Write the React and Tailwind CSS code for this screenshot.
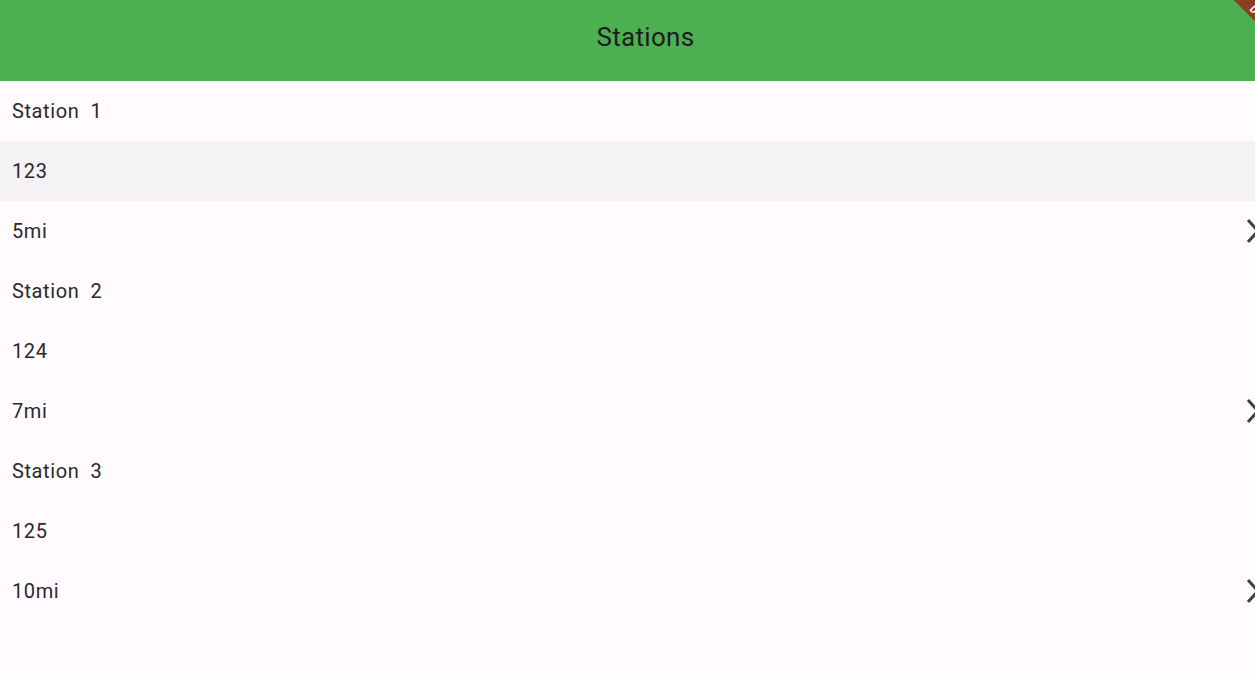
import { Fragment } from 'react'

const stations = [
  { name: 'Station  1', id: '123', dist: '5mi' },
  { name: 'Station  2', id: '124', dist: '7mi' },
  { name: 'Station  3', id: '125', dist: '10mi' },
]

const Chevron = () => (
  <svg width="24" height="28" viewBox="0 0 24 28" className="shrink-0 -mr-[14px]">
    <polyline points="3,3 13,14 3,25" fill="none" stroke="#3f3f46" strokeWidth="3" />
  </svg>
)

const Row = ({ children, shaded, trailing }) => (
  <div
    className={`h-[60px] flex items-center pl-[12px] text-[20px] tracking-[0.6px] text-[#2a282d] ${
      shaded ? 'bg-[#f4f2f4]' : ''
    }`}
  >
    <span className="flex-1 whitespace-pre">{children}</span>
    {trailing && <Chevron />}
  </div>
)

export default function App() {
  return (
    <div
      className="relative w-[1255px] h-[680px] overflow-hidden bg-[#fffbfe]"
      style={{ fontFamily: 'Roboto, "Liberation Sans", sans-serif' }}
    >
      <header className="h-[81px] bg-[#4caf50] flex items-center justify-center pl-[36px] pb-[6px]">
        <h1 className="text-[26px] text-[#1d1b20] tracking-[0.3px]">Stations</h1>
      </header>

      <div>
        {stations.map((s, i) => (
          <Fragment key={s.id}>
            <Row>{s.name}</Row>
            <Row shaded={i === 0}>{s.id}</Row>
            <Row trailing>{s.dist}</Row>
          </Fragment>
        ))}
      </div>

      {/* debug banner */}
      <div className="absolute top-[12px] right-[-80px] w-[140px] h-[16px] rotate-45 bg-[#8e3b22] flex items-center justify-center">
        <span className="text-[10px] font-bold text-white tracking-[1px]">DEBUG</span>
      </div>
    </div>
  )
}
